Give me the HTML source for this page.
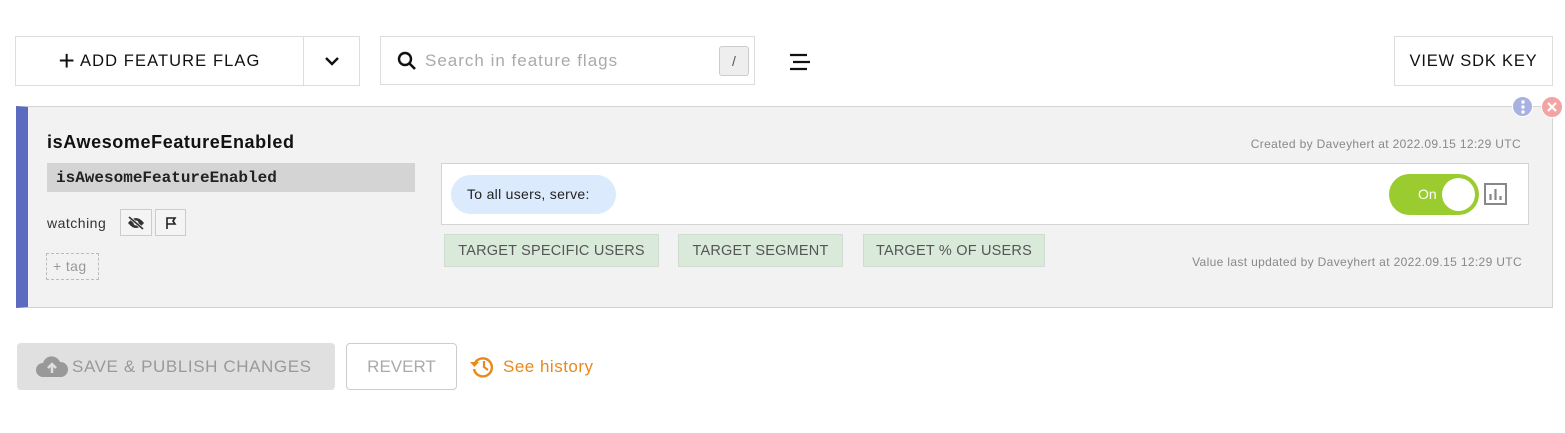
<!DOCTYPE html>
<html><head><style>
body{margin:0;width:1565px;height:433px;background:#fff;font-family:"Liberation Sans",sans-serif;position:relative;overflow:hidden}
.a{position:absolute;box-sizing:border-box}
.btn{border:1px solid #ddd;background:#fff;display:flex;align-items:center;justify-content:center;color:#111;font-size:16.5px}
.gt{border:1px solid #cfdccf;background:#d9eadb;color:#555;font-size:14.5px;display:flex;align-items:center;justify-content:center;letter-spacing:.2px}
.sm{font-size:12px;color:#888;letter-spacing:.35px}
</style></head><body>
<div class="a btn" style="left:15px;top:36px;width:289px;height:50px;letter-spacing:1.1px"><span style="font-size:28px;font-weight:300;margin-right:4px;line-height:1">+</span>ADD FEATURE FLAG</div>
<div class="a btn" style="left:303px;top:36px;width:57px;height:50px"><svg width="16" height="10" viewBox="0 0 16 10"><path d="M2 2l6 6 6-6" fill="none" stroke="#111" stroke-width="2.4"/></svg></div>
<div class="a btn" style="left:380px;top:36px;width:375px;height:49px;justify-content:flex-start;padding-left:16px;color:#aaa;font-size:17px;letter-spacing:1px">
<svg width="20" height="20" viewBox="0 0 20 20" style="margin-right:8px"><circle cx="8" cy="8" r="6" fill="none" stroke="#111" stroke-width="2.4"/><path d="M12.5 12.5l5.5 5.5" stroke="#111" stroke-width="2.6"/></svg>Search in feature flags</div>
<div class="a" style="left:719px;top:46px;width:30px;height:30px;background:#eee;border:1px solid #ccc;border-radius:3px;color:#555;font-size:14px;display:flex;align-items:center;justify-content:center">/</div>
<svg class="a" style="left:789px;top:53px" width="22" height="18"><path d="M1 2h17M4 9h17M1 16h17" stroke="#111" stroke-width="2.2"/></svg>
<div class="a btn" style="left:1394px;top:36px;width:159px;height:50px;letter-spacing:.8px">VIEW SDK KEY</div>

<div class="a" style="left:16px;top:106px;width:1537px;height:202px;background:#f2f2f2;border:1px solid #d4d4d4;border-left:12px solid #5c6bc0"></div>
<div class="a" style="left:1512px;top:96px;width:21px;height:21px;border-radius:50%;background:#a9b1e2;border:1px solid #fff"><svg width="21" height="21"><circle cx="10" cy="5" r="1.7" fill="#fff"/><circle cx="10" cy="10" r="1.7" fill="#fff"/><circle cx="10" cy="15" r="1.7" fill="#fff"/></svg></div>
<div class="a" style="left:1541px;top:96px;width:22px;height:22px;border-radius:50%;background:#f3a3a3;border:1px solid #fff"><svg width="20" height="20"><path d="M6 6l8 8M14 6l-8 8" stroke="#fff" stroke-width="2.2"/></svg></div>
<div class="a" style="left:47px;top:132px;font-size:18px;font-weight:bold;color:#111;letter-spacing:.6px">isAwesomeFeatureEnabled</div>
<div class="a" style="left:47px;top:163px;width:368px;height:29px;background:#d4d4d4;font-family:'Liberation Mono',monospace;font-weight:bold;font-size:16px;color:#222;padding:6px 0 0 9px">isAwesomeFeatureEnabled</div>
<div class="a" style="left:47px;top:215px;font-size:14px;color:#333;letter-spacing:.5px">watching</div>
<div class="a" style="left:120px;top:209px;width:32px;height:27px;border:1px solid #ccc;background:#f4f4f4;display:flex;align-items:center;justify-content:center"><svg width="18" height="14" viewBox="0 0 18 14"><path d="M1 7q8-10 16 0q-8 10-16 0z" fill="#333"/><circle cx="9" cy="7" r="2.5" fill="#f4f4f4"/><path d="M2 1l14 12" stroke="#f4f4f4" stroke-width="3"/><path d="M2 1l14 12" stroke="#333" stroke-width="1.6"/></svg></div>
<div class="a" style="left:155px;top:209px;width:31px;height:27px;border:1px solid #ccc;background:#f4f4f4;display:flex;align-items:center;justify-content:center"><svg width="12" height="14"><path d="M2 13V2h8l-2 3 2 3H2" fill="none" stroke="#222" stroke-width="1.6"/></svg></div>
<div class="a" style="left:46px;top:253px;width:53px;height:27px;border:1px dashed #bbb;color:#999;font-size:14px;padding:4px 0 0 6px;letter-spacing:.4px">+ tag</div>
<div class="a sm" style="right:44px;top:137px">Created by Daveyhert at 2022.09.15 12:29 UTC</div>
<div class="a" style="left:441px;top:163px;width:1088px;height:62px;background:#fff;border:1px solid #d4d4d4"></div>
<div class="a" style="left:451px;top:175px;width:165px;height:39px;border-radius:20px;background:#dbeafc;font-size:14px;color:#222;padding:11px 0 0 16px;letter-spacing:.3px">To all users, serve:</div>
<div class="a" style="left:1389px;top:174px;width:90px;height:41px;border-radius:21px;background:#9acb2f;color:#fff;font-size:14px;padding:12px 0 0 29px">On<div class="a" style="left:53px;top:4px;width:33px;height:33px;border-radius:50%;background:#fff"></div></div>
<svg class="a" style="left:1484px;top:183px" width="23" height="22"><rect x="1" y="1" width="21" height="20" fill="none" stroke="#888" stroke-width="2"/><path d="M6.5 17V11M11.5 17V6M16.5 17V13" stroke="#888" stroke-width="2.2"/></svg>
<div class="a gt" style="left:444px;top:234px;width:215px;height:33px">TARGET SPECIFIC USERS</div>
<div class="a gt" style="left:678px;top:234px;width:165px;height:33px">TARGET SEGMENT</div>
<div class="a gt" style="left:863px;top:234px;width:182px;height:33px">TARGET % OF USERS</div>
<div class="a sm" style="right:43px;top:255px">Value last updated by Daveyhert at 2022.09.15 12:29 UTC</div>

<div class="a" style="left:17px;top:343px;width:318px;height:47px;background:#e0e0e0;border-radius:4px;color:#999;font-size:17px;display:flex;align-items:center;padding-left:18px;letter-spacing:.6px"><svg width="34" height="24" viewBox="0 0 34 24" style="margin-right:3px"><path d="M8 22a7 7 0 010-14 9 9 0 0117-1 7.5 7.5 0 011 15z" fill="#999"/><path d="M17 18V10M13 13l4-4 4 4" fill="none" stroke="#e0e0e0" stroke-width="2.5"/></svg>SAVE &amp; PUBLISH CHANGES</div>
<div class="a" style="left:346px;top:343px;width:111px;height:47px;border:1px solid #ccc;border-radius:4px;color:#aaa;font-size:17px;display:flex;align-items:center;justify-content:center">REVERT</div>
<svg class="a" style="left:469px;top:354px" width="26" height="25" viewBox="0 0 26 25"><path d="M6 9a9 9 0 11-1 6" fill="none" stroke="#e8891a" stroke-width="2.4"/><path d="M1 8l4.5 5 4.5-5z" fill="#e8891a"/><path d="M15 7v6l4 3" fill="none" stroke="#e8891a" stroke-width="2.2"/></svg>
<div class="a" style="left:503px;top:357px;color:#e8891a;font-size:17px;letter-spacing:.5px">See history</div>
</body></html>
